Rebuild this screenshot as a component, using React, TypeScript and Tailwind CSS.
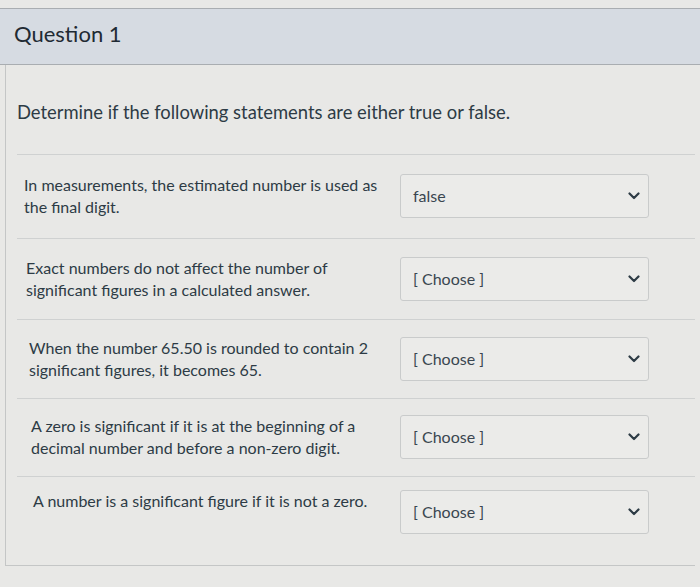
const rows = [
  { text: ["In measurements, the estimated number is used as", "the final digit."], value: "false", h: "h-[84px]", pl: "pl-[7px]" },
  { text: ["Exact numbers do not affect the number of", "significant figures in a calculated answer."], value: "[ Choose ]", h: "h-[81px]", pl: "pl-[9px]" },
  { text: ["When the number 65.50 is rounded to contain 2", "significant figures, it becomes 65."], value: "[ Choose ]", h: "h-[79px]", pl: "pl-[12px]" },
  { text: ["A zero is significant if it is at the beginning of a", "decimal number and before a non-zero digit."], value: "[ Choose ]", h: "h-[78px]", pl: "pl-[14px]" },
];

const Chevron = () => (
  <svg width="12" height="8" viewBox="0 0 12 8" fill="none">
    <path d="M1.5 1.5 L6 6 L10.5 1.5" stroke="#2d3b45" strokeWidth="2.2" strokeLinecap="round" strokeLinejoin="round" />
  </svg>
);

const Select = ({ value }: { value: string }) => (
  <div className="w-[249px] h-[44px] shrink-0 border border-[#c9cbcb] rounded-[3px] bg-[#ebebe9] flex items-center justify-between pl-[12px] pr-[8px]">
    <span className="text-[16px] text-[#3a4650]">{value}</span>
    <Chevron />
  </div>
);

const App = () => {
  return (
    <div className="w-[700px] h-[587px] overflow-hidden bg-[#e8e8e6] pt-[8px] text-[#2d3b45]" style={{ fontFamily: "Lato, 'Noto Sans', sans-serif" }}>
      {/* header */}
      <div className="h-[57px] bg-[#d6dbe2] border-y border-[#a9adb1] flex items-center pl-[14px] pb-[7px]">
        <h2 className="text-[22px] text-[#1f2a33]">Question 1</h2>
      </div>

      <div className="mx-[5px] border-l border-b border-[#c4c6c6] h-[501px]">
        <p className="text-[18.4px] pl-[11px] pt-[34px] pb-[27px] text-[#2d3b45]">Determine if the following statements are either true or false.</p>

        <div className="ml-[11px] border-t border-[#cfd1d1]">
          {rows.map((r, i) => (
            <div key={i} className={`${r.h} border-b border-[#cfd1d1] flex items-center justify-between pr-[46px]`}>
              <div className={`${r.pl} text-[16px] leading-[22px] text-[#2d3b45]`}>
                <div>{r.text[0]}</div>
                <div>{r.text[1]}</div>
              </div>
              <Select value={r.value} />
            </div>
          ))}
          <div className="h-[72px] flex items-start justify-between pr-[46px] pt-[13px]">
            <div className="pl-[16px] pt-[-2px] text-[16px] leading-[22px] text-[#2d3b45]">A number is a significant figure if it is not a zero.</div>
            <Select value="[ Choose ]" />
          </div>
        </div>
      </div>
    </div>
  );
};

export default App;
